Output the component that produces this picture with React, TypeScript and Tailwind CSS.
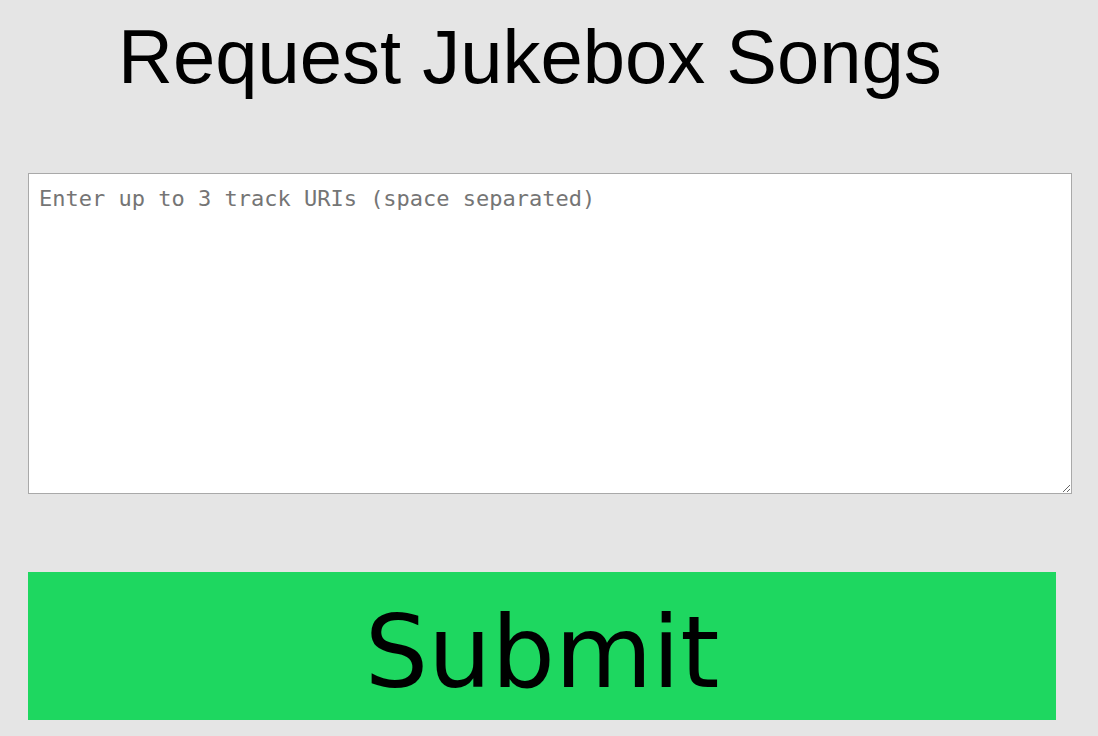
import React, { useState } from 'react'

const App: React.FC = () => {
    const [uris, setUris] = useState<string>('')

    // just logs for now, no backend here
    const submitHandler = () => {
        const tracks = uris.trim().split(/\s+/).filter(Boolean).slice(0, 3)
        console.log(tracks)
    }

    return (
        <div className="min-h-screen bg-[#e5e5e5] pl-[28px] pb-[16px]">
            <h1 className="pl-[90px] pt-[13px] text-[76px] leading-[87px] font-normal text-black font-['Liberation_Sans',Arial,sans-serif]">
                Request Jukebox Songs
            </h1>
            <textarea
                value={uris}
                onChange={(e) => setUris(e.target.value)}
                placeholder="Enter up to 3 track URIs (space separated)"
                className="block mt-[73px] w-[1044px] h-[321px] bg-white border border-[#a9a9a9] px-[10px] pt-[8px] pb-[10px] text-[22px] text-black placeholder:text-[#757575] outline-none font-['DejaVu_Sans_Mono',monospace]"
            />
            <button
                onClick={submitHandler}
                className="block mt-[78px] w-[1028px] h-[148px] bg-[#1ed760] text-black text-[100px] leading-[116px] pt-[14px] font-['DejaVu_Sans',Verdana,sans-serif] cursor-pointer"
            >
                Submit
            </button>
        </div>
    )
}

export default App
